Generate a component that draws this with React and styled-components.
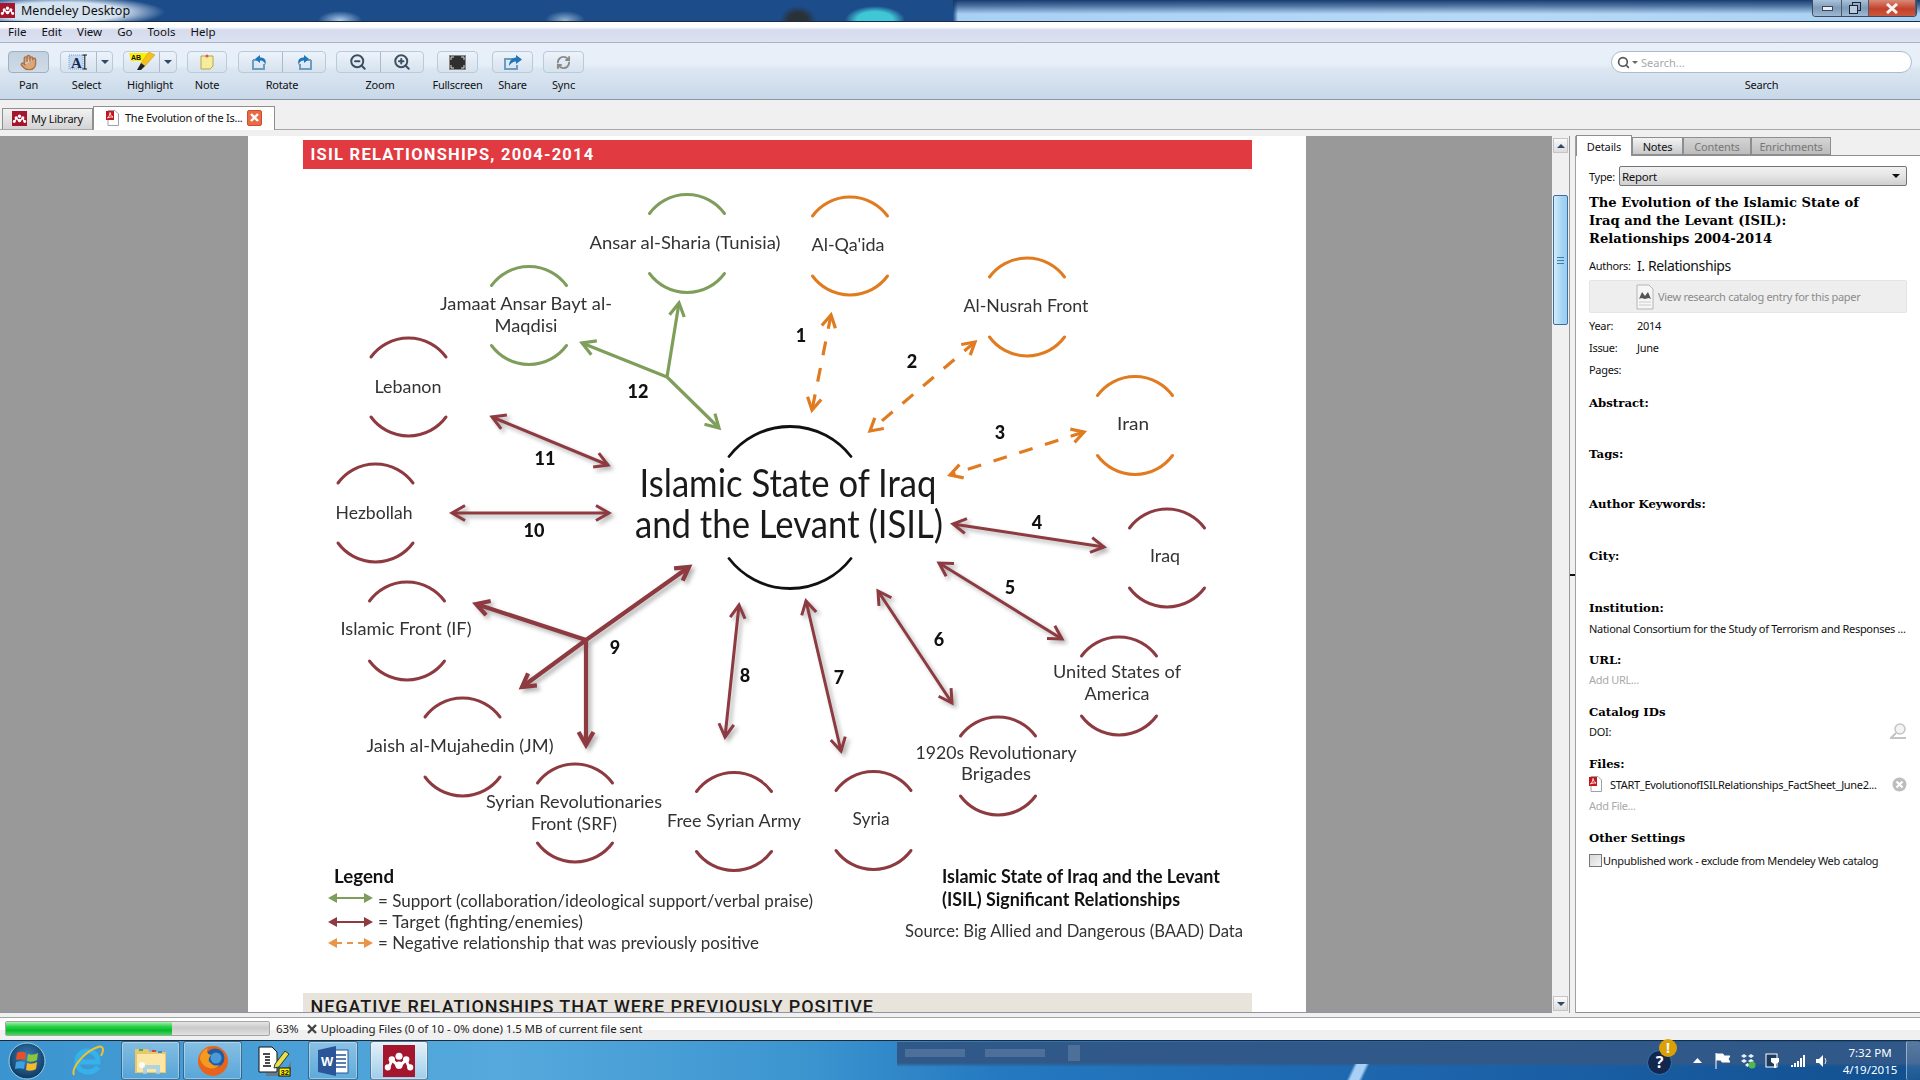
import React from "react";
import styled, { createGlobalStyle } from "styled-components";
import { Hand, ZoomIn, ZoomOut, RefreshCw, Search as SearchIcon } from "lucide-react";

const GlobalStyle = createGlobalStyle`
  html, body { margin: 0; padding: 0; overflow: hidden; background: #f0f0f0; }
  * { box-sizing: border-box; }
`;

const UI = `"Noto Sans", "Open Sans", sans-serif`;
const Doc = `Lato, "Open Sans", sans-serif`;

const Window = styled.div`
  width: 1920px;
  height: 1080px;
  display: flex;
  flex-direction: column;
  overflow: hidden;
  font-family: ${UI};
  color: #111;
`;

/* ---- title bar ---- */
const TitleBar = styled.div`
  height: 22px;
  flex-shrink: 0;
  display: flex;
  align-items: flex-start;
  justify-content: space-between;
  border-bottom: 1px solid #1d2c3c;
  background:
    linear-gradient(to bottom, rgba(16, 52, 105, 0.95) 0, rgba(16, 52, 105, 0.6) 6px, rgba(16, 52, 105, 0) 14px) 953px 0 / 967px 21px no-repeat,
    radial-gradient(ellipse 105px 16px at 60px 12px, #d5e2f0 60%, rgba(213, 226, 240, 0)),
    radial-gradient(ellipse 22px 9px at 340px 20px, #a9c8e8, rgba(169, 200, 232, 0)),
    radial-gradient(ellipse 20px 9px at 565px 20px, #8fb0d0, rgba(143, 176, 208, 0)),
    radial-gradient(ellipse 18px 14px at 798px 20px, #2a3238 50%, rgba(42, 50, 56, 0)),
    radial-gradient(ellipse 30px 14px at 875px 20px, #3fc7d6 60%, rgba(63, 199, 214, 0)),
    linear-gradient(to right, #1c4c8a 953px, #a8d0f5 958px, #b7d9f7 1500px, #a9d0f2 1920px);
`;
const TitleLeft = styled.div`
  display: flex;
  align-items: center;
  gap: 6px;
  height: 21px;
  font-size: 12.5px;
`;
const WinButtons = styled.div`
  display: flex;
  height: 17px;
  margin-right: 3px;
  border: 1px solid #3c4a5c;
  border-top: 0;
  border-radius: 0 0 4px 4px;
  overflow: hidden;
`;
const WinButton = styled.div`
  width: ${(p) => p.$w}px;
  display: flex;
  align-items: center;
  justify-content: center;
  border-right: 1px solid #4c5a6c;
  background: ${(p) =>
    p.$close
      ? "linear-gradient(#d88a78, #c5402a 55%, #c9583f)"
      : "linear-gradient(#a9c2dc, #7d9ab8 50%, #9db9d4)"};
`;

/* ---- menu ---- */
const MenuBar = styled.div`
  height: 21px;
  flex-shrink: 0;
  display: flex;
  align-items: center;
  gap: 15px;
  padding: 0 0 1px 8px;
  font-size: 11.5px;
  border-bottom: 1px solid #a6b4c8;
  background: linear-gradient(#fff 0, #fff 5px, #d5dbee 8px, #dde2f1 100%);
`;

/* ---- toolbar ---- */
const Toolbar = styled.div`
  height: 57px;
  flex-shrink: 0;
  display: flex;
  padding: 8px 8px 0 8px;
  border-bottom: 1px solid #8a97a6;
  background: linear-gradient(#e9f0fa 0, #e6eef8 40%, #dde7f3 45%, #c8d8e8 100%);
`;
const ToolItem = styled.div`
  width: ${(p) => p.$w}px;
  margin-left: ${(p) => p.$ml || 0}px;
  flex-shrink: 0;
  display: flex;
  flex-direction: column;
  align-items: center;
`;
const ToolGroup = styled.div`
  width: 100%;
  height: 22px;
  display: flex;
  border: 1px solid ${(p) => (p.$on ? "#9fb0c2" : "#b9cadb")};
  border-radius: 4px;
  background: ${(p) =>
    p.$on ? "linear-gradient(#c3d0de, #cfdbe7)" : "linear-gradient(#edf3fa, #d6e2ee)"};
`;
const ToolCell = styled.div`
  flex: ${(p) => (p.$w ? `0 0 ${p.$w}px` : 1)};
  display: flex;
  align-items: center;
  justify-content: center;
  & + & { border-left: 1px solid #a9bbcd; }
`;
const ToolLabel = styled.div`
  margin-top: 4px;
  font-size: 11px;
  line-height: 15px;
  letter-spacing: -0.2px;
  white-space: nowrap;
`;
const Caret = styled.span`
  width: 0;
  height: 0;
  border-left: 4px solid transparent;
  border-right: 4px solid transparent;
  border-top: 4px solid #2c4a66;
`;
const SearchWrap = styled.div`
  margin-left: auto;
  width: 301px;
  display: flex;
  flex-direction: column;
  align-items: center;
`;
const SearchBox = styled.div`
  width: 100%;
  height: 22px;
  display: flex;
  align-items: center;
  gap: 2px;
  padding-left: 5px;
  border: 1px solid #adbccd;
  border-radius: 11px;
  background: #fff;
  font-size: 11px;
  color: #a8a8a8;
`;
const SmallCaret = styled(Caret)`
  border-left-width: 3px;
  border-right-width: 3px;
  border-top: 3px solid #666;
  margin-right: 1px;
`;

/* ---- tabs ---- */
const TabBar = styled.div`
  height: 30px;
  flex-shrink: 0;
  display: flex;
  align-items: flex-end;
  padding-left: 2px;
  border-bottom: 1px solid #a8a8a8;
  background: #f0f0f0;
`;
const DocTab = styled.div`
  height: ${(p) => (p.$on ? 24 : 22)}px;
  width: ${(p) => p.$w}px;
  display: flex;
  align-items: center;
  gap: ${(p) => (p.$on ? 6 : 4)}px;
  padding: 0 0 2px ${(p) => (p.$on ? 12 : 9)}px;
  margin-bottom: -1px;
  font-size: 11px;
  letter-spacing: -0.25px;
  white-space: nowrap;
  border: 1px solid #8f8f8f;
  border-bottom: ${(p) => (p.$on ? "0" : "1px solid #a8a8a8")};
  background: ${(p) => (p.$on ? "#fff" : "linear-gradient(#f2f2f2, #d4d4d4)")};
`;
const TabGap = styled.div`
  height: 6px;
  flex-shrink: 0;
  background: #f0f0f0;
`;
const CloseBox = styled.span`
  width: 15px;
  height: 16px;
  flex-shrink: 0;
  margin-left: -2px;
  display: flex;
  align-items: center;
  justify-content: center;
  background: #ea6a45;
  border: 1px solid #c9502e;
  border-radius: 2px;
`;

/* ---- main area ---- */
const Main = styled.div`
  height: 877px;
  flex-shrink: 0;
  display: flex;
  background: #f0f0f0;
`;
const Viewer = styled.div`
  width: 1552px;
  height: 100%;
  flex-shrink: 0;
  display: flex;
  justify-content: center;
  overflow: hidden;
  background: #999;
  border-bottom: 1px solid #8f96a4;
`;
const Page = styled.div`
  width: 1058px;
  transform: translateX(1px);
  display: flex;
  flex-direction: column;
  align-items: center;
  padding-top: 4px;
  background: #fff;
`;
const RedBand = styled.div`
  width: 949px;
  height: 29px;
  flex-shrink: 0;
  padding-left: 8px;
  color: #fff;
  background: #e23a41;
  font: 700 16.5px/29px Roboto, sans-serif;
  letter-spacing: 1.25px;
`;
const Figure = styled.svg`
  display: block;
  width: 1058px;
  height: 824px;
  flex-shrink: 0;
  filter: blur(0.35px);
`;
const GreyBand = styled.div`
  width: 949px;
  height: 40px;
  flex-shrink: 0;
  padding-left: 8px;
  background: #e8e4dc;
  color: #1a1a1a;
  font: 500 18px/28px Roboto, sans-serif;
  letter-spacing: 0.95px;
`;
const Arc = styled.path`
  fill: none;
  stroke: ${(p) => p.$c};
  stroke-width: ${(p) => p.$w || 3};
  stroke-linecap: round;
`;
const Shaft = styled.line`
  stroke: ${(p) => p.$c};
  stroke-width: ${(p) => p.$w || 3.2};
  stroke-dasharray: ${(p) => p.$dash || "none"};
`;
const Head = styled.polyline`
  fill: none;
  stroke: ${(p) => p.$c};
  stroke-width: ${(p) => p.$w || 3.2};
`;
const ArrowGroup = styled.g`
  filter: ${(p) => (p.$shadow ? "drop-shadow(3px 3px 2px rgba(0,0,0,0.3))" : "none")};
`;
const SolidHead = styled.polygon`
  fill: ${(p) => p.$c};
`;
const Label = styled.text`
  font-family: ${Doc};
  font-size: ${(p) => p.$s || 17.5}px;
  font-weight: ${(p) => p.$b || 400};
  fill: ${(p) => p.$c || "#333"};
  text-anchor: ${(p) => p.$a || "middle"};
  dominant-baseline: central;
  transform: translateY(-1px);
`;

/* ---- scroll bar ---- */
const ScrollTrack = styled.div`
  width: 18px;
  flex-shrink: 0;
  display: flex;
  flex-direction: column;
  align-items: center;
  padding: 2px 0;
  background: #f0f0f0;
  border-right: 1px solid #9a9a9a;
`;
const ScrollBtn = styled.div`
  width: 15px;
  height: 15px;
  display: flex;
  align-items: center;
  justify-content: center;
  margin-top: ${(p) => (p.$auto ? "auto" : "0")};
  border: 1px solid #c4c4c4;
  background: linear-gradient(#fafafa, #dcdcdc);
`;
const ScrollThumb = styled.div`
  width: 15px;
  height: 130px;
  margin-top: 42px;
  display: flex;
  align-items: center;
  justify-content: center;
  border: 1px solid #3f6d9d;
  border-radius: 2px;
  background: linear-gradient(to right, #d3ecfb, #a3d6f4 60%, #9acdf0);
`;
const Grip = styled.div`
  width: 7px;
  height: 7px;
  background: repeating-linear-gradient(#3f7fa9 0 1px, transparent 1px 3px);
`;
const Splitter = styled.div`
  width: 6px;
  flex-shrink: 0;
  display: flex;
  align-items: center;
  background: #f0f0f0;
  border-right: 1px solid #a0a0a0;
`;
const SplitTick = styled.div`
  width: 5px;
  height: 2px;
  background: #111;
`;

/* ---- details panel ---- */
const Side = styled.div`
  width: 344px;
  flex-shrink: 0;
  display: flex;
  flex-direction: column;
  background: #fff;
`;
const SideTabs = styled.div`
  height: 20px;
  flex-shrink: 0;
  display: flex;
  align-items: flex-end;
  background: #f0f0f0;
  border-bottom: 1px solid #8e8e8e;
`;
const SideTab = styled.div`
  width: ${(p) => p.$w}px;
  height: ${(p) => (p.$on ? 21 : 18)}px;
  margin-bottom: ${(p) => (p.$on ? -1 : 0)}px;
  display: flex;
  align-items: center;
  justify-content: center;
  font-size: 11px;
  letter-spacing: -0.15px;
  color: ${(p) => (p.$off ? "#777" : "#111")};
  border: 1px solid #8e8e8e;
  border-bottom: ${(p) => (p.$on ? "0" : "1px solid #8e8e8e")};
  background: ${(p) =>
    p.$on ? "#fff" : p.$off ? "linear-gradient(#d4d4d4, #bcbcbc)" : "linear-gradient(#f4f4f4, #c9c9c9)"};
`;
const SideBody = styled.div`
  flex: 1;
  min-width: 0;
  padding: 0 13px;
  display: flex;
  flex-direction: column;
  overflow: hidden;
  border-bottom: 1px solid #8e8e8e;
`;
const Row = styled.div`
  height: ${(p) => p.$h || 20}px;
  margin-top: ${(p) => p.$mt || 0}px;
  padding-bottom: 2px;
  flex-shrink: 0;
  display: flex;
  align-items: center;
  font-size: 11px;
  letter-spacing: -0.3px;
  color: ${(p) => (p.$muted ? "#a9a9a9" : "#111")};
  white-space: nowrap;
`;
const RowKey = styled.span`
  width: ${(p) => p.$w}px;
  flex-shrink: 0;
`;
const TypeSelect = styled.div`
  flex: 1;
  height: 20px;
  display: flex;
  align-items: center;
  justify-content: space-between;
  padding: 0 6px 0 2px;
  border: 1px solid #70757c;
  border-radius: 2px;
  font-size: 11.5px;
  background: linear-gradient(#f2f2f2, #e4e4e4 50%, #cfcfcf);
`;
const PaperTitle = styled.div`
  margin-top: 7px;
  font: 700 13.1px/18px "DejaVu Serif", serif;
  color: #000;
`;
const AuthorName = styled.span`
  font-size: 14px;
  letter-spacing: -0.4px;
`;
const CatalogLink = styled.div`
  height: 33px;
  margin-top: 4px;
  flex-shrink: 0;
  display: flex;
  align-items: center;
  gap: 4px;
  padding-left: 46px;
  font-size: 11px;
  letter-spacing: -0.3px;
  color: #8b8b8b;
  background: #eee;
  border: 1px solid #e4e4e4;
  border-radius: 2px;
`;
const Heading = styled.div`
  height: 20px;
  margin-top: ${(p) => p.$mt || 0}px;
  flex-shrink: 0;
  font: 700 11.7px/20px "DejaVu Serif", serif;
  color: #000;
`;
const Pushed = styled.span`
  margin-left: auto;
  display: flex;
`;
const FileName = styled.span`
  margin-left: 8px;
`;
const Check = styled.span`
  width: 13px;
  height: 13px;
  margin-right: 1px;
  border: 1px solid #777;
  background: linear-gradient(135deg, #d8d8d8, #f4f4f4);
`;

/* ---- status bar ---- */
const StatusBar = styled.div`
  height: 23px;
  margin-top: 4px;
  flex-shrink: 0;
  display: flex;
  align-items: center;
  padding: 0 0 1px 5px;
  font-size: 11.5px;
  letter-spacing: -0.1px;
  border-top: 1px solid #a3a3a3;
  background: linear-gradient(#fff 0, #fff 12px, #f0f0f0 12px);
  color: #222;
`;
const Progress = styled.div`
  width: 265px;
  height: 15px;
  flex-shrink: 0;
  border: 1px solid #a5a5a5;
  border-radius: 2px;
  background: linear-gradient(#e6e6e6, #c9c9c9 45%, #e2e2e2);
`;
const ProgressFill = styled.div`
  height: 100%;
  background: linear-gradient(#a7eeb0, #2bd24a 35%, #07b92b 65%, #44d65f);
`;
const Percent = styled.span`
  margin: 0 9px 0 6px;
`;
const StopMark = styled.svg`
  margin-right: 3px;
`;

/* ---- task bar ---- */
const Taskbar = styled.div`
  flex: 1;
  display: flex;
  align-items: stretch;
  border-top: 1px solid #1e2a38;
  background:
    linear-gradient(rgba(255, 255, 255, 0.14), rgba(255, 255, 255, 0.14)) 905px 8px / 60px 8px no-repeat,
    linear-gradient(rgba(255, 255, 255, 0.14), rgba(255, 255, 255, 0.14)) 985px 8px / 60px 8px no-repeat,
    linear-gradient(rgba(255, 255, 255, 0.14), rgba(255, 255, 255, 0.14)) 1068px 4px / 12px 16px no-repeat,
    linear-gradient(115deg, rgba(170, 210, 245, 0) 35%, #a8d0f5 42%, #a8d0f5 58%, rgba(170, 210, 245, 0) 65%) 1335px 23px / 46px 16px no-repeat,
    linear-gradient(#30598a 0, #30598a 21px, rgba(48, 89, 138, 0) 25px) 897px 1px / 1023px 25px no-repeat,
    linear-gradient(to right, #3b94cf 0, #55a9dc 500px, #3d95d0 800px, #2479c0 1000px, #1c63ab 1450px, #12508f 1920px);
`;
const TaskBtn = styled.div`
  width: ${(p) => p.$w}px;
  margin-left: ${(p) => p.$ml || 0}px;
  flex-shrink: 0;
  display: flex;
  align-items: center;
  justify-content: center;
  border-radius: 3px;
  ${(p) =>
    p.$open &&
    `border: 1px solid rgba(20,60,90,.6);
     box-shadow: inset 0 0 0 1px rgba(255,255,255,.35);
     background: linear-gradient(rgba(255,255,255,.35), rgba(255,255,255,.1));`}
  ${(p) => p.$active && `background: linear-gradient(rgba(255,255,255,.85), rgba(255,255,255,.45));`}
`;
const Tray = styled.div`
  margin-left: auto;
  display: flex;
  align-items: center;
`;
const TrayIcon = styled.div`
  position: relative;
  width: 25px;
  height: 20px;
  margin-right: ${(p) => p.$mr || 0}px;
  display: flex;
  align-items: center;
  justify-content: center;
`;
const Clock = styled.div`
  width: 70px;
  text-align: center;
  font-size: 11.5px;
  line-height: 17px;
  color: #fff;
`;
const ShowDesktop = styled.div`
  width: 14px;
  margin-left: 1px;
  align-self: stretch;
  border-left: 1px solid rgba(220, 235, 250, 0.5);
  border-radius: 2px;
  background: linear-gradient(rgba(255, 255, 255, 0.2), rgba(255, 255, 255, 0.05));
`;
const HelpBadge = styled.div`
  position: absolute;
  left: 12px;
  top: -12px;
  width: 18px;
  height: 18px;
  display: flex;
  align-items: center;
  justify-content: center;
  border-radius: 50%;
  color: #fff;
  font-weight: 700;
  font-size: 14px;
  background: #dba008;
`;
const HelpCircle = styled.div`
  width: 25px;
  height: 25px;
  flex-shrink: 0;
  margin-top: 3px;
  display: flex;
  align-items: center;
  justify-content: center;
  border-radius: 50%;
  color: #fff;
  font-weight: 700;
  font-size: 16px;
  background: #12264e;
  border: 1px solid #2a78b8;
`;

/* ---- drawn icons ---- */
const MendeleyLogo = ({ size = 15 }) => (
  <svg width={size} height={size} viewBox="0 0 20 20">
    <rect width="20" height="20" fill="#a5152e" />
    <circle cx="10" cy="7" r="2.2" fill="#fff" />
    <circle cx="5.5" cy="9" r="2" fill="#fff" />
    <circle cx="14.5" cy="9" r="2" fill="#fff" />
    <circle cx="3" cy="14" r="1.9" fill="#fff" />
    <circle cx="17" cy="14" r="1.9" fill="#fff" />
    <circle cx="10" cy="12.6" r="2.3" fill="#fff" />
    <path d="M2 15 L5.5 8 L10 12 L14.5 8 L18 15 L15.5 14 L14 11 L10 15 L6 11 L4.5 14 Z" fill="#fff" />
  </svg>
);
const PdfIcon = () => (
  <svg width="13" height="16" viewBox="0 0 13 16">
    <path d="M2 .5 H9 L12.5 4 V15.5 H2 Z" fill="#fff" stroke="#9aa3ab" />
    <rect x="0" y="1" width="8" height="9" fill="#c4161c" />
    <path d="M1.5 8 C3.5 6 4 4 4 2.5 C4.5 5 5.5 6.5 7 7 C5 6.8 3 7.2 1.5 8 Z" fill="none" stroke="#fff" strokeWidth=".9" />
  </svg>
);
const SelectIcon = () => (
  <svg width="22" height="18" viewBox="0 0 22 18">
    <rect x="1" y="2" width="14" height="14" fill="#c6d9f2" stroke="#7d9fd0" strokeDasharray="1 1" />
    <text x="3" y="15" fontFamily="Liberation Serif" fontWeight="700" fontSize="15" fill="#152a4c">A</text>
    <path d="M14.5 2 H19 M16.8 2 V16 M14.5 16 H19" stroke="#111" fill="none" />
  </svg>
);
const HighlightIcon = () => (
  <svg width="26" height="20" viewBox="0 0 26 20">
    <path d="M0 1 H20 L18 9 H2 Z" fill="#ffee00" />
    <text x="2" y="8" fontFamily="Liberation Sans" fontWeight="700" fontSize="7" fill="#111">AB</text>
    <path d="M20 0 L26 3 L16 14 L12 11 Z" fill="#f3c11e" stroke="#c99100" strokeWidth=".5" />
    <path d="M12 11 L16 14 L12 18 L8 18 Z" fill="#222" />
  </svg>
);
const NoteIcon = () => (
  <svg width="14" height="16" viewBox="0 0 14 16">
    <path d="M1 2 H13 V12 L10 15 H1 Z" fill="#f7ec9c" stroke="#b8a64c" />
    <circle cx="7" cy="2" r="1.5" fill="#e0555a" />
  </svg>
);
const RotateIcon = ({ flip }) => (
  <svg width="20" height="17" viewBox="0 0 20 17" style={{ transform: flip ? "scaleX(-1)" : "none" }}>
    <path d="M3 6 H8 M3 6 V15 H14 V10" fill="none" stroke="#6c9dc0" strokeWidth="2" />
    <path d="M10 1 L5 5 L10 9 V6.5 C13 6.5 15 8 15 11 C17 7 15 3 10 3.5 Z" fill="#1f76ba" />
  </svg>
);
const FullIcon = () => (
  <svg width="17" height="15" viewBox="0 0 17 15">
    <rect x=".5" y=".5" width="16" height="14" fill="#2f2f2f" stroke="#888" />
    <path d="M2 2 H5 M2 2 V5 M15 2 H12 M15 2 V5 M2 13 H5 M2 13 V10 M15 13 H12 M15 13 V10" stroke="#ddd" fill="none" />
  </svg>
);
const ShareIcon = () => (
  <svg width="20" height="17" viewBox="0 0 20 17">
    <path d="M10 5 H2 V15 H14 V11" fill="none" stroke="#6c9dc0" strokeWidth="2" />
    <path d="M13 1 L19 5.5 L13 10 V7.5 C10 7.5 8 9 6 12 C6 7 9 3.5 13 3.5 Z" fill="#1f76ba" />
  </svg>
);
const StartOrb = () => (
  <svg width="38" height="38" viewBox="0 0 38 38">
    <defs>
      <radialGradient id="orb" cx="50%" cy="40%" r="60%">
        <stop offset="0" stopColor="#3d84b8" />
        <stop offset="1" stopColor="#0d3760" />
      </radialGradient>
    </defs>
    <circle cx="19" cy="19" r="18" fill="url(#orb)" stroke="#9fd0e8" strokeWidth="1" />
    <path d="M9 11 C12 9 15 10 18 11 L17 18 C14 17 11 17 8 18 Z" fill="#e8502a" />
    <path d="M20 12 C23 13 26 13 30 11 L29 18 C26 20 22 20 19 19 Z" fill="#8dc53f" />
    <path d="M8 20 C11 19 14 19 17 20 L16 27 C13 26 10 26 7 27 Z" fill="#3da2e0" />
    <path d="M19 21 C22 22 26 22 29 20 L28 27 C25 29 21 29 18 28 Z" fill="#f8b92a" />
  </svg>
);
const IeIcon = () => (
  <svg width="34" height="34" viewBox="0 0 34 34">
    <path d="M7 18 H27 C27 11 23 7 17 7 C10 7 6 12 6 18 C6 24 10 28 17 28 C21 28 25 26 27 23" fill="none" stroke="#35b2ea" strokeWidth="5" />
    <path d="M3 31 C0 25 12 8 27 3 C33 1 33 7 30 12" fill="none" stroke="#f0c22e" strokeWidth="2" />
  </svg>
);
const FolderIcon = () => (
  <svg width="34" height="30" viewBox="0 0 34 30">
    <path d="M1 3 H14 L16 6 H32 V27 H1 Z" fill="#e8c76a" />
    <path d="M3 8 H31 V26 H3 Z" fill="#fbe6a6" />
    <rect x="5" y="3" width="4" height="2" fill="#4ea84a" />
    <rect x="18" y="4" width="4" height="2" fill="#d8453a" />
    <rect x="24" y="5" width="4" height="2" fill="#3a8fd8" />
    <path d="M9 28 V19 H26 V28 H22 V23 H13 V28 Z" fill="#9fd0ea" opacity=".85" />
    <circle cx="8" cy="19" r="3" fill="#fff" opacity=".9" />
  </svg>
);
const FoxIcon = () => (
  <svg width="32" height="32" viewBox="0 0 32 32">
    <circle cx="16" cy="16" r="15" fill="#e8641c" />
    <circle cx="18" cy="13" r="9.5" fill="#1c5da8" />
    <circle cx="19" cy="13" r="5.5" fill="#4a9ad8" />
    <path d="M3 14 C6 24 17 26 23 20 C20 21 16 21 14 18 C11 17 11 13 14 10 C10 9 9 6 11 3 C6 5 3 9 3 14 Z" fill="#f59a1e" />
  </svg>
);
const ScriptIcon = () => (
  <svg width="34" height="32" viewBox="0 0 34 32">
    <path d="M8 28 H27 L33 16 V26 L27 31 H8 Z" fill="#6a7a86" />
    <path d="M1 2 H14 L19 7 V27 H1 Z" fill="#fff" stroke="#111" />
    <path d="M5 9 H12 M7 12 H12 M7 15 H12 M7 18 H12 M5 21 H13" stroke="#111" strokeWidth="1.3" />
    <path d="M17 19 L27 6 L31 9 L21 22 L16 23 Z" fill="#e8e04a" stroke="#333" />
    <rect x="21" y="23" width="11" height="8" fill="#ffee00" stroke="#111" />
    <text x="22.5" y="30" fontFamily="Liberation Sans" fontWeight="700" fontSize="7.5" fill="#111">32</text>
  </svg>
);
const WordIcon = () => (
  <svg width="32" height="32" viewBox="0 0 32 32">
    <rect x="13" y="5" width="18" height="23" fill="#fff" stroke="#2a5699" />
    <path d="M18 10 H29 M18 14 H29 M18 18 H29 M18 22 H29" stroke="#2a5699" strokeWidth="1.5" />
    <path d="M1 5 L19 1 V31 L1 27 Z" fill="#2a5699" />
    <text x="4" y="21" fontFamily="Liberation Sans" fontWeight="700" fontSize="13" fill="#fff">W</text>
  </svg>
);

/* ---- figure data ---- */
const GREEN = "#7f9e5b";
const ORANGE = "#e07b20";
const RED = "#8d3a40";

const NODES = [
  [687, 243.5, GREEN], [850, 246, ORANGE], [529, 315.5, GREEN], [1027, 307, ORANGE],
  [1135, 425.5, ORANGE], [1167, 558, RED], [1119, 686, RED], [998, 766, RED],
  [873.5, 820.5, RED], [734, 821.5, RED], [575, 813, RED], [462.5, 747, RED],
  [407, 631, RED], [375.5, 513, RED], [408.5, 387, RED],
];
const NAMES = [
  ["Ansar al-Sharia (Tunisia)", 685, 243, 191],
  ["Al-Qa'ida", 848, 245, 73],
  ["Jamaat Ansar Bayt al-", 526, 304, 172],
  ["Maqdisi", 526, 326, 63],
  ["Al-Nusrah Front", 1026, 306, 125],
  ["Iran", 1133, 424, 32],
  ["Iraq", 1165, 556, 30],
  ["United States of", 1117, 672, 128],
  ["America", 1117, 694, 65],
  ["1920s Revolutionary", 996, 753, 161],
  ["Brigades", 996, 774, 70],
  ["Syria", 871, 819, 37],
  ["Free Syrian Army", 734, 821, 134],
  ["Syrian Revolutionaries", 574, 802, 176],
  ["Front (SRF)", 574, 824, 86],
  ["Jaish al-Mujahedin (JM)", 460, 746, 187],
  ["Islamic Front (IF)", 406, 629, 131],
  ["Hezbollah", 374, 513, 77],
  ["Lebanon", 408, 387, 67],
];
// [x1, y1, x2, y2, both ends?]
const DASHED = [
  [831, 315, 812, 410], [975, 342, 870, 431], [1084, 432, 950, 475],
];
const TARGETS = [
  [953, 524, 1104, 547, 1], [939, 563, 1062, 639, 1], [878, 591, 952, 703, 1],
  [806, 601, 841, 751, 1], [739, 605, 725, 737, 1], [452, 513, 609, 513, 1],
  [492, 417, 608, 465, 1], [586, 640, 476, 604], [586, 640, 522, 687],
  [586, 640, 586, 745], [586, 640, 689, 567],
];
const SUPPORT = [[667, 377, 679, 303], [667, 377, 582, 343], [667, 377, 719, 428]];
const NUMBERS = [
  ["1", 801, 336], ["2", 912, 362], ["3", 1000, 433], ["4", 1037, 523], ["5", 1010, 588],
  ["6", 939, 640], ["7", 839, 678], ["8", 745, 676], ["9", 615, 648], ["10", 534, 531],
  ["11", 545, 459], ["12", 638, 392],
];

const wing = (x1, y1, x2, y2, len) => {
  const a = Math.atan2(y1 - y2, x1 - x2);
  const p = (d) => `${x2 + len * Math.cos(a + d)},${y2 + len * Math.sin(a + d)}`;
  return `${p(0.52)} ${x2},${y2} ${p(-0.52)}`;
};

const Arrow = ({ a, c, dash, w, len = 15, both = a[4] }) => {
  const [x1, y1, x2, y2] = a;
  return (
    <g>
      <Shaft x1={x1} y1={y1} x2={x2} y2={y2} $c={c} $dash={dash} $w={w} />
      <Head points={wing(x1, y1, x2, y2, len)} $c={c} $w={w} />
      {both && <Head points={wing(x2, y2, x1, y1, len)} $c={c} $w={w} />}
    </g>
  );
};

const Node = ({ cx, cy, c, half = 37.5, near = 30, r = 46.5, w }) => (
  <g>
    <Arc $c={c} $w={w} d={`M${cx - half} ${cy - near} A${r} ${r} 0 0 1 ${cx + half} ${cy - near}`} />
    <Arc $c={c} $w={w} d={`M${cx - half} ${cy + near} A${r} ${r} 0 0 0 ${cx + half} ${cy + near}`} />
  </g>
);

const LegendArrow = ({ y, c, dash }) => (
  <g>
    <Shaft x1={336} y1={y} x2={366} y2={y} $c={c} $w={2} $dash={dash} />
    <SolidHead $c={c} points={`328,${y} 337,${y - 5} 337,${y + 5}`} />
    <SolidHead $c={c} points={`373,${y} 364,${y - 5} 364,${y + 5}`} />
  </g>
);

const Diagram = () => (
  <Figure viewBox="248 169 1058 824">
    {NODES.map(([cx, cy, c]) => (
      <Node key={`${cx}-${cy}`} cx={cx} cy={cy} c={c} />
    ))}
    <Node cx={790} cy={507.5} c="#111" half={61} near={51} r={77} w={2.8} />
    {NAMES.map(([t, x, y, w]) => (
      <Label key={t} x={x} y={y} textLength={w} lengthAdjust="spacingAndGlyphs">{t}</Label>
    ))}
    <Label x={788} y={483} $s={38} $c="#1a1a1a" textLength={297} lengthAdjust="spacingAndGlyphs">Islamic State of Iraq</Label>
    <Label x={789} y={524} $s={38} $c="#1a1a1a" textLength={308} lengthAdjust="spacingAndGlyphs">and the Levant (ISIL)</Label>

    {DASHED.map((a) => (
      <Arrow key={a.join()} a={a} c={ORANGE} dash="14 13" both len={14} />
    ))}
    <ArrowGroup $shadow>
      {TARGETS.map((a) => (
        <Arrow key={a.join()} a={a} c={RED} w={a.length === 4 ? 4.2 : 3} />
      ))}
    </ArrowGroup>
    {SUPPORT.map((a) => (
      <Arrow key={a.join()} a={a} c={GREEN} />
    ))}
    {NUMBERS.map(([t, x, y]) => (
      <Label key={t} x={x} y={y} $s={18} $b={900} $c="#111">{t}</Label>
    ))}

    <Label x={334} y={877} $a="start" $s={18} $b={700} $c="#111" textLength={60} lengthAdjust="spacingAndGlyphs">Legend</Label>
    <LegendArrow y={898} c={GREEN} />
    <LegendArrow y={922} c={RED} />
    <LegendArrow y={943} c="#e8954a" dash="6 5" />
    <Label x={378} y={901} $a="start" textLength={435} lengthAdjust="spacingAndGlyphs">= Support (collaboration/ideological support/verbal praise)</Label>
    <Label x={378} y={922} $a="start" textLength={205} lengthAdjust="spacingAndGlyphs">= Target (fighting/enemies)</Label>
    <Label x={378} y={943} $a="start" textLength={381} lengthAdjust="spacingAndGlyphs">= Negative relationship that was previously positive</Label>

    <Label x={942} y={877} $a="start" $s={18} $b={700} $c="#111" textLength={278} lengthAdjust="spacingAndGlyphs">Islamic State of Iraq and the Levant</Label>
    <Label x={942} y={900} $a="start" $s={18} $b={700} $c="#111" textLength={238} lengthAdjust="spacingAndGlyphs">(ISIL) Significant Relationships</Label>
    <Label x={905} y={931} $a="start" textLength={338} lengthAdjust="spacingAndGlyphs">Source: Big Allied and Dangerous (BAAD) Data</Label>
  </Figure>
);

const MENU = ["File", "Edit", "View", "Go", "Tools", "Help"];

export default function App() {
  return (
    <Window>
      <GlobalStyle />
      <TitleBar>
        <TitleLeft>
          <MendeleyLogo size={15} />
          Mendeley Desktop
        </TitleLeft>
        <WinButtons>
          <WinButton $w={29}>
            <svg width="11" height="5"><rect x=".5" y=".5" width="10" height="4" fill="#e8eef5" stroke="#445" /></svg>
          </WinButton>
          <WinButton $w={27}>
            <svg width="12" height="12"><rect x="3.5" y=".5" width="8" height="8" fill="none" stroke="#223" /><rect x=".5" y="3.5" width="8" height="8" fill="#b8cce0" stroke="#223" /></svg>
          </WinButton>
          <WinButton $w={47} $close>
            <svg width="14" height="11"><path d="M2 1 L12 10 M12 1 L2 10" stroke="#f4f4f4" strokeWidth="3" /></svg>
          </WinButton>
        </WinButtons>
      </TitleBar>

      <MenuBar>
        {MENU.map((m) => (
          <span key={m}>{m}</span>
        ))}
      </MenuBar>

      <Toolbar>
        <ToolItem $w={41}>
          <ToolGroup $on>
            <ToolCell><Hand size={17} fill="#dca777" color="#a9744a" /></ToolCell>
          </ToolGroup>
          <ToolLabel>Pan</ToolLabel>
        </ToolItem>
        <ToolItem $w={53} $ml={11}>
          <ToolGroup>
            <ToolCell $w={35}><SelectIcon /></ToolCell>
            <ToolCell><Caret /></ToolCell>
          </ToolGroup>
          <ToolLabel>Select</ToolLabel>
        </ToolItem>
        <ToolItem $w={54} $ml={10}>
          <ToolGroup>
            <ToolCell $w={35}><HighlightIcon /></ToolCell>
            <ToolCell><Caret /></ToolCell>
          </ToolGroup>
          <ToolLabel>Highlight</ToolLabel>
        </ToolItem>
        <ToolItem $w={40} $ml={10}>
          <ToolGroup>
            <ToolCell><NoteIcon /></ToolCell>
          </ToolGroup>
          <ToolLabel>Note</ToolLabel>
        </ToolItem>
        <ToolItem $w={88} $ml={11}>
          <ToolGroup>
            <ToolCell><RotateIcon /></ToolCell>
            <ToolCell><RotateIcon flip /></ToolCell>
          </ToolGroup>
          <ToolLabel>Rotate</ToolLabel>
        </ToolItem>
        <ToolItem $w={88} $ml={10}>
          <ToolGroup>
            <ToolCell><ZoomOut size={18} strokeWidth={2.6} color="#3c4f60" /></ToolCell>
            <ToolCell><ZoomIn size={18} strokeWidth={2.6} color="#3c4f60" /></ToolCell>
          </ToolGroup>
          <ToolLabel>Zoom</ToolLabel>
        </ToolItem>
        <ToolItem $w={41} $ml={13}>
          <ToolGroup>
            <ToolCell><FullIcon /></ToolCell>
          </ToolGroup>
          <ToolLabel>Fullscreen</ToolLabel>
        </ToolItem>
        <ToolItem $w={41} $ml={14}>
          <ToolGroup>
            <ToolCell><ShareIcon /></ToolCell>
          </ToolGroup>
          <ToolLabel>Share</ToolLabel>
        </ToolItem>
        <ToolItem $w={41} $ml={10}>
          <ToolGroup>
            <ToolCell><RefreshCw size={15} strokeWidth={3} color="#8a8a8a" /></ToolCell>
          </ToolGroup>
          <ToolLabel>Sync</ToolLabel>
        </ToolItem>
        <SearchWrap>
          <SearchBox>
            <SearchIcon size={13} strokeWidth={3} color="#555" />
            <SmallCaret />
            Search...
          </SearchBox>
          <ToolLabel>Search</ToolLabel>
        </SearchWrap>
      </Toolbar>

      <TabBar>
        <DocTab $w={91}>
          <MendeleyLogo size={15} />
          My Library
        </DocTab>
        <DocTab $w={182} $on>
          <PdfIcon />
          The Evolution of the Is...
          <CloseBox>
            <svg width="9" height="9"><path d="M1 1 L8 8 M8 1 L1 8" stroke="#fff" strokeWidth="2.4" /></svg>
          </CloseBox>
        </DocTab>
      </TabBar>
      <TabGap />

      <Main>
        <Viewer>
          <Page>
            <RedBand>ISIL RELATIONSHIPS, 2004-2014</RedBand>
            <Diagram />
            <GreyBand>NEGATIVE RELATIONSHIPS THAT WERE PREVIOUSLY POSITIVE</GreyBand>
          </Page>
        </Viewer>
        <ScrollTrack>
          <ScrollBtn><Caret style={{ transform: "rotate(180deg)" }} /></ScrollBtn>
          <ScrollThumb><Grip /></ScrollThumb>
          <ScrollBtn $auto><Caret /></ScrollBtn>
        </ScrollTrack>
        <Splitter><SplitTick /></Splitter>
        <Side>
          <SideTabs>
            <SideTab $w={56} $on>Details</SideTab>
            <SideTab $w={51}>Notes</SideTab>
            <SideTab $w={68} $off>Contents</SideTab>
            <SideTab $w={80} $off>Enrichments</SideTab>
          </SideTabs>
          <SideBody>
            <Row $mt={11}>
              <RowKey $w={30}>Type:</RowKey>
              <TypeSelect>Report<Caret style={{ borderTopColor: "#111" }} /></TypeSelect>
            </Row>
            <PaperTitle>
              The Evolution of the Islamic State of
              <br />
              Iraq and the Levant (ISIL):
              <br />
              Relationships 2004-2014
            </PaperTitle>
            <Row $mt={8}>
              <RowKey $w={48}>Authors:</RowKey>
              <AuthorName>I. Relationships</AuthorName>
            </Row>
            <CatalogLink>
              <svg width="18" height="26" viewBox="0 0 18 26">
                <path d="M1 1 H13 L17 5 V25 H1 Z" fill="#f6f6f6" stroke="#b5b5b5" />
                <path d="M3 15 L6 8 L9 12 L12 8 L15 15 L12.5 14 L9 15 L5.5 14 Z" fill="#555" />
                <path d="M3 18 H15 M3 21 H15" stroke="#ccc" />
              </svg>
              View research catalog entry for this paper
            </CatalogLink>
            <Row $h={22} $mt={2}><RowKey $w={48}>Year:</RowKey>2014</Row>
            <Row $h={22}><RowKey $w={48}>Issue:</RowKey>June</Row>
            <Row $h={22}><RowKey $w={48}>Pages:</RowKey></Row>
            <Heading $mt={12}>Abstract:</Heading>
            <Heading $mt={31}>Tags:</Heading>
            <Heading $mt={30}>Author Keywords:</Heading>
            <Heading $mt={32}>City:</Heading>
            <Heading $mt={32}>Institution:</Heading>
            <Row $mt={1}>National Consortium for the Study of Terrorism and Responses ...</Row>
            <Heading $mt={11}>URL:</Heading>
            <Row $muted>Add URL...</Row>
            <Heading $mt={12}>Catalog IDs</Heading>
            <Row>
              DOI:
              <Pushed>
                <svg width="17" height="16" viewBox="0 0 17 16">
                  <circle cx="10" cy="6" r="5" fill="#f4f4f4" stroke="#c4c4c4" strokeWidth="1.5" />
                  <path d="M6 10 L1 15 H16" stroke="#c4c4c4" strokeWidth="2" fill="none" />
                </svg>
              </Pushed>
            </Row>
            <Heading $mt={12}>Files:</Heading>
            <Row $mt={1}>
              <PdfIcon />
              <FileName>START_EvolutionofISILRelationships_FactSheet_June2...</FileName>
              <Pushed>
                <svg width="15" height="15" viewBox="0 0 15 15">
                  <circle cx="7.5" cy="7.5" r="7" fill="#bdbdbd" />
                  <path d="M4.5 4.5 L10.5 10.5 M10.5 4.5 L4.5 10.5" stroke="#fff" strokeWidth="2" />
                </svg>
              </Pushed>
            </Row>
            <Row $mt={1} $muted>Add File...</Row>
            <Heading $mt={12}>Other Settings</Heading>
            <Row $mt={3}>
              <Check />
              Unpublished work - exclude from Mendeley Web catalog
            </Row>
          </SideBody>
        </Side>
      </Main>

      <StatusBar>
        <Progress>
          <ProgressFill style={{ width: "63%" }} />
        </Progress>
        <Percent>63%</Percent>
        <StopMark width="10" height="10">
          <path d="M1 1 L9 9 M9 1 L1 9" stroke="#444" strokeWidth="2.4" />
        </StopMark>
        Uploading Files (0 of 10 - 0% done) 1.5 MB of current file sent
      </StatusBar>

      <Taskbar>
        <TaskBtn $w={54}><StartOrb /></TaskBtn>
        <TaskBtn $w={67}><IeIcon /></TaskBtn>
        <TaskBtn $w={59} $open><FolderIcon /></TaskBtn>
        <TaskBtn $w={59} $ml={3} $open><FoxIcon /></TaskBtn>
        <TaskBtn $w={66}><ScriptIcon /></TaskBtn>
        <TaskBtn $w={50} $open><WordIcon /></TaskBtn>
        <TaskBtn $w={58} $ml={12} $open $active><MendeleyLogo size={32} /></TaskBtn>
        <Tray>
          <TrayIcon $mr={13}>
            <HelpCircle>?</HelpCircle>
            <HelpBadge>!</HelpBadge>
          </TrayIcon>
          <TrayIcon>
            <svg width="9" height="5"><path d="M0 5 L4.5 0 L9 5 Z" fill="#fff" /></svg>
          </TrayIcon>
          <TrayIcon>
            <svg width="15" height="16"><path d="M1 0 V16 M1 1 H8 L9 3 H15 L13 6 L15 9 H7 L6 7 H1" fill="#fff" stroke="#fff" /></svg>
          </TrayIcon>
          <TrayIcon>
            <svg width="16" height="16" viewBox="0 0 16 16">
              <path d="M4 1 L7 3 L4 5 L1 3 Z M11 1 L14 3 L11 5 L8 3 Z M4 6 L7 8 L4 10 L1 8 Z M11 6 L14 8 L11 10 L8 8 Z M7.5 10 L10 12 L7.5 14 L5 12 Z" fill="#eaf2fa" />
              <circle cx="12" cy="12" r="3.5" fill="#4fb848" />
            </svg>
          </TrayIcon>
          <TrayIcon>
            <svg width="16" height="16" viewBox="0 0 16 16">
              <rect x="1" y="1" width="11" height="13" fill="#1d3a60" stroke="#fff" />
              <path d="M6 5 H14 V9 L11 11 V15 H9 V11 L6 9 Z" fill="#fff" />
            </svg>
          </TrayIcon>
          <TrayIcon>
            <svg width="16" height="12"><path d="M1 10 h2 v2 h-2z M4 8 h2 v4 h-2z M7 6 h2 v6 h-2z M10 3 h2 v9 h-2z M13 0 h2 v12 h-2z" fill="#fff" /></svg>
          </TrayIcon>
          <TrayIcon>
            <svg width="13" height="14"><path d="M0 5 H3 L7 1 V13 L3 9 H0 Z" fill="#fff" /><path d="M9 4 Q11 7 9 10" stroke="#ddd" fill="none" /></svg>
          </TrayIcon>
          <Clock>
            7:32 PM
            <br />
            4/19/2015
          </Clock>
          <ShowDesktop />
        </Tray>
      </Taskbar>
    </Window>
  );
}
